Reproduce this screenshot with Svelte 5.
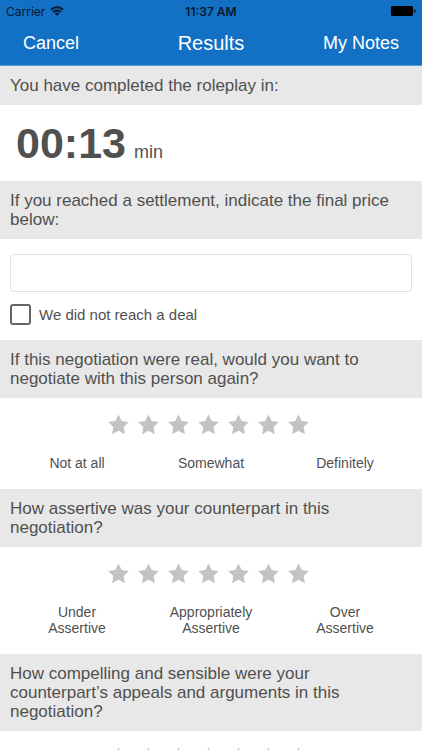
<script lang="ts">
    interface Question {
        id: string;
        text: string;
        labels: string[];
    }

    const STAR_COUNT = 7;
    const questions: Question[] = [
        {
            id: "again",
            text: "If this negotiation were real, would you want to negotiate with this person again?",
            labels: ["Not at all", "Somewhat", "Definitely"]
        },
        {
            id: "assertive",
            text: "How assertive was your counterpart in this negotiation?",
            labels: ["Under Assertive", "Appropriately Assertive", "Over Assertive"]
        },
        {
            id: "compelling",
            text: "How compelling and sensible were your counterpart’s appeals and arguments in this negotiation?",
            labels: []
        }
    ];

    let price: string = "";
    let noDeal: boolean = false;
    let ratings: Record<string, number> = {};

    function rate(id: string, value: number) {
        ratings[id] = value;
    }
</script>

<div class="screen">
    <header>
        <div class="status-bar">
            <div class="carrier">
                <span>Carrier</span>
                <svg class="wifi" viewBox="0 0 14 10" aria-hidden="true">
                    <path d="M.9 3.7a8.7 8.7 0 0 1 12.2 0" />
                    <path d="M3.2 6a5.4 5.4 0 0 1 7.6 0" />
                    <path class="dot" d="M7 9.8 4.7 7.5a3.3 3.3 0 0 1 4.6 0z" />
                </svg>
            </div>
            <span class="clock">11:37 AM</span>
            <svg class="battery" viewBox="0 0 25 10" aria-hidden="true">
                <rect x="0" y="0" width="22" height="10" rx="1.5" />
                <path d="M23 3.2c2 .6 2 3 0 3.6z" />
            </svg>
        </div>
        <nav>
            <button>Cancel</button>
            <h1>Results</h1>
            <button>My Notes</button>
        </nav>
    </header>

    <main>
        <h2>You have completed the roleplay in:</h2>
        <div class="timer">
            <strong>00:13</strong>
            <span>min</span>
        </div>

        <h2><label for="price">If you reached a settlement, indicate the final price below:</label></h2>
        <div class="settlement">
            <input id="price" type="text" bind:value={price} disabled={noDeal} />
            <label class="no-deal">
                <input type="checkbox" bind:checked={noDeal} />
                <span>We did not reach a deal</span>
            </label>
        </div>

        {#each questions as question}
            <h2 id={question.id}>{question.text}</h2>
            <div class="rating">
                <div class="stars" role="group" aria-labelledby={question.id}>
                    {#each Array(STAR_COUNT) as _, i}
                        <button class:selected={i < (ratings[question.id] ?? 0)} aria-label="{i + 1} of {STAR_COUNT}" on:click={() => rate(question.id, i + 1)}>
                            <svg viewBox="0 0 21 21" aria-hidden="true">
                                <path d="M10.5.4l3.2 6.5 7.1 1-5.1 5 1.2 7.3-6.4-3.5-6.4 3.5 1.2-7.3-5.1-5 7.1-1z" />
                            </svg>
                        </button>
                    {/each}
                </div>
                {#if question.labels.length > 0}
                    <div class="labels">
                        {#each question.labels as label}
                            <span>{label}</span>
                        {/each}
                    </div>
                {/if}
            </div>
        {/each}
    </main>
</div>

<style>
    :global(body) {
        margin: 0;
        background-color: #fff;
        color: #505050;
        font-family: "Liberation Sans", Arial, sans-serif;
    }

    .screen {
        display: flex;
        flex-direction: column;
        height: 100vh;
    }
    main {
        flex: 1;
        min-height: 0;
        overflow-y: auto;
        scrollbar-width: none;
    }

    header {
        background-color: #1271c4;
        border-bottom: 1px solid #5b9bd6;
    }
    .status-bar {
        display: grid;
        grid-template-columns: 1fr auto 1fr;
        align-items: center;
        height: 22px;
        padding: 0 6px;

        color: #06182b;
        font-family: Inter, "Liberation Sans", sans-serif;
        font-size: 12px;
    }
    .carrier {
        display: flex;
        align-items: center;
        gap: 5px;
    }
    .wifi {
        width: 14px;
        height: 10px;

        fill: none;
        stroke: #06182b;
        stroke-width: 2;
    }
    .wifi .dot {
        fill: #06182b;
        stroke: none;
    }
    .clock {
        font-weight: 600;
    }
    .battery {
        justify-self: end;
        width: 25px;
        height: 10px;
        fill: #000;
    }

    nav {
        display: grid;
        grid-template-columns: 1fr auto 1fr;
        align-items: center;
        height: 43px;
        padding: 0 23px;
        color: #fff;
    }
    nav button {
        justify-self: start;
        padding: 0;
        border: none;
        background: none;
        color: inherit;
        font-family: inherit;
        font-size: 18px;
        cursor: pointer;
    }
    nav button:last-child {
        justify-self: end;
    }
    h1 {
        margin: 0;
        font-size: 20px;
        font-weight: normal;
    }

    h2 {
        margin: 0;
        padding: 10px;
        background-color: #e8e8e8;
        font-size: 17px;
        font-weight: normal;
        line-height: 19px;
    }

    .timer {
        display: flex;
        align-items: baseline;
        gap: 8px;
        padding: 14px 16px;
        font-size: 18px;
        line-height: 20px;
    }
    .timer strong {
        font-size: 43px;
        line-height: 48px;
    }

    .settlement {
        display: flex;
        flex-direction: column;
        gap: 12px;
        padding: 15px 10px;
    }
    .settlement input[type="text"] {
        box-sizing: border-box;
        width: 100%;
        height: 38px;
        padding: 0 10px;
        border: 1px solid #e0e0e0;
        border-radius: 4px;
        background-color: #fff;
        color: inherit;
        font-family: inherit;
        font-size: 17px;
    }
    .no-deal {
        display: flex;
        align-items: center;
        gap: 8px;
        font-size: 15px;
    }
    .no-deal input {
        appearance: none;
        box-sizing: border-box;
        width: 21px;
        height: 21px;
        margin: 0;
        border: 2px solid #666;
        border-radius: 3px;
    }
    .no-deal input:checked {
        background-color: #1271c4;
    }

    .rating {
        padding: 16px 10px 18px;
    }
    .stars {
        display: flex;
        justify-content: center;
        gap: 9px;
        padding-right: 5px;
    }
    .stars button {
        width: 21px;
        height: 21px;
        padding: 0;
        border: none;
        background: none;
        cursor: pointer;
    }
    .stars svg {
        display: block;
        fill: #c3c3c3;
    }
    .stars .selected svg {
        fill: #1271c4;
    }
    .labels {
        display: grid;
        grid-template-columns: repeat(3, 1fr);
        margin-top: 20px;
        font-size: 14px;
        line-height: 16px;
        text-align: center;
    }
    .labels span {
        padding: 0 24px;
    }
</style>
